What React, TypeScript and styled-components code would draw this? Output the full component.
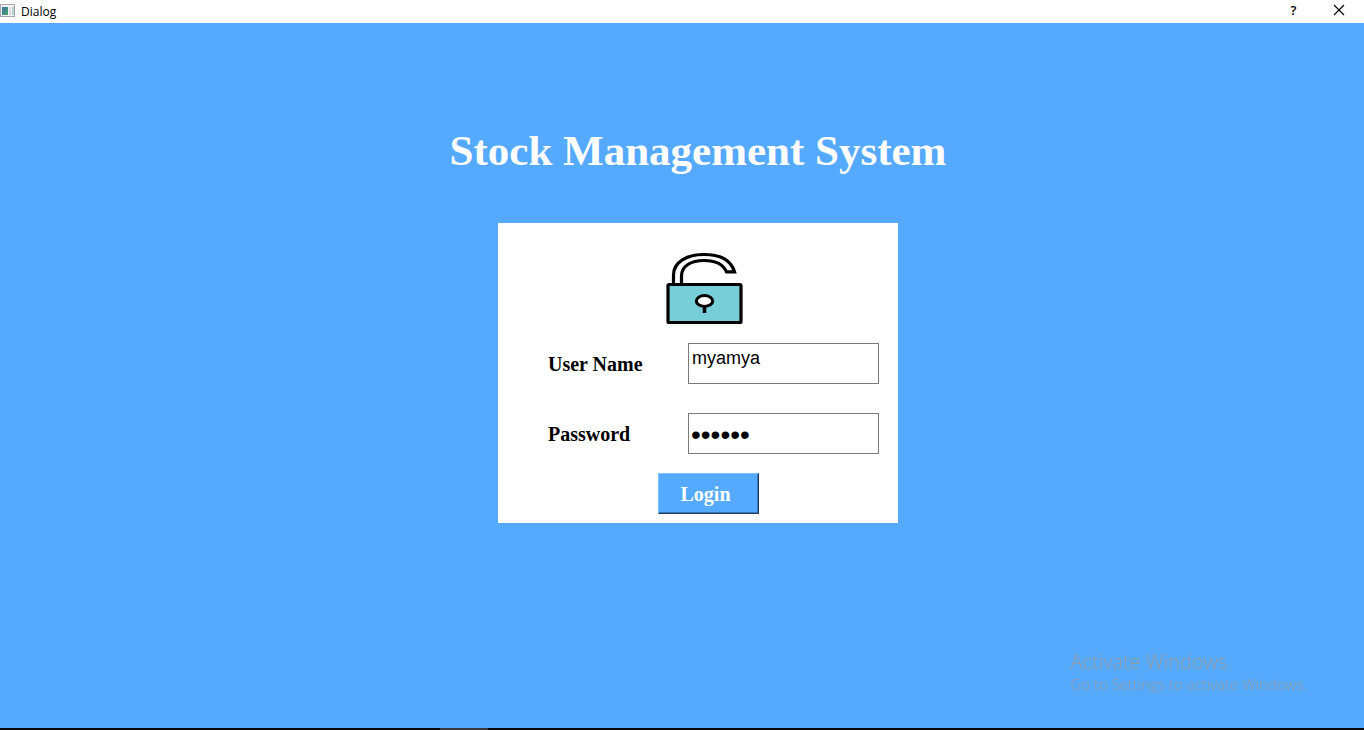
import React, { useState } from 'react';
import styled, { createGlobalStyle } from 'styled-components';

const GlobalStyle = createGlobalStyle`
  *, *::before, *::after { box-sizing: border-box; }
  body { margin: 0; background: #55aaff; }
`;

const serif = `'Palatino Linotype', 'Liberation Serif', serif`;
const ui = `'Open Sans', 'Noto Sans', sans-serif`;

const Window = styled.div`
  display: flex;
  flex-direction: column;
  min-height: 100vh;
  background: #55aaff;
`;

const TitleBar = styled.header`
  display: flex;
  align-items: center;
  height: 23px;
  background: #fff;
  color: #000;
  font: 12px/22px ${ui};
`;

const WindowTitle = styled.span`
  flex: 1;
  margin-left: 6px;
`;

const CaptionButton = styled.button`
  display: flex;
  align-items: center;
  justify-content: center;
  width: 45px;
  height: 20px;
  padding: 0;
  border: 0;
  background: transparent;
  color: #000;
  font: 600 13px/20px ${ui};
`;

const CaptionButtons = styled.div`
  display: flex;
  align-self: flex-start;
  padding-right: 3px;
`;

const Content = styled.main`
  flex: 1;
  display: flex;
  flex-direction: column;
  align-items: center;
  padding: 100px 0 100px 32px;
`;

const Heading = styled.h1`
  margin: 0 0 44px;
  color: #fff;
  font: bold 43px/56px ${serif};
  white-space: nowrap;
`;

const Card = styled.form`
  display: flex;
  flex-direction: column;
  width: 400px;
  padding: 28px 19px 9px 50px;
  background: #fff;
`;

const LockIcon = styled.svg`
  display: block;
  width: 80px;
  height: 76px;
  margin: 0 0 16px 117px;
`;

const Field = styled.div`
  display: grid;
  grid-template-columns: 140px 1fr;
  align-items: center;
  margin-bottom: ${(p: { $gap: number }) => p.$gap}px;
`;

const Label = styled.label`
  color: #000;
  font: bold 20px/24px ${serif};
`;

const TextBox = styled.input`
  width: 100%;
  height: 41px;
  padding: 0 3px 10px;
  border: 1px solid #7a7a7a;
  border-radius: 0;
  outline: 0;
  background: #fff;
  color: #000;
  font: 18px/24px 'Liberation Sans', sans-serif;
`;

const PasswordBox = styled(TextBox)`
  padding: 2px 2px 0;
  font-size: 28px;
`;

const LoginButton = styled.button`
  width: 101px;
  height: 41px;
  margin-left: 110px;
  padding: 0 6px 0 0;
  border: 1px solid;
  border-color: #80bfff #1c3c5c #1c3c5c #80bfff;
  box-shadow: inset -1px -1px #3a76b4;
  background: #55aaff;
  color: #fff;
  font: bold 20px/24px ${serif};
`;

const Watermark = styled.aside`
  position: fixed;
  right: 57px;
  bottom: 36px;
  color: #989ca4;
  font: 300 15px/20px ${ui};
  pointer-events: none;
`;

const WatermarkTitle = styled.div`
  font-size: 20px;
  line-height: 24px;
`;

const TaskEdge = styled.footer`
  display: grid;
  grid-template-columns: 440px 48px 1fr;
  height: 2px;
  background: #08080c;
`;

const ActiveTask = styled.span`
  grid-column: 2;
  background: #38383c;
`;

function AppIcon() {
  return (
    <svg width="15" height="16" viewBox="0 0 15 16" aria-hidden="true">
      <defs>
        <linearGradient id="pane" x1="0" y1="0" x2="1" y2="1">
          <stop offset="0" stopColor="#3f6fae" />
          <stop offset="1" stopColor="#43a35c" />
        </linearGradient>
      </defs>
      <rect x="0.5" y="0.5" width="14" height="12" fill="#f1f2f4" stroke="#a3a7ac" />
      <rect x="2" y="3" width="6" height="8" fill="url(#pane)" />
      <rect x="9" y="3" width="2" height="8" fill="#d9dce0" />
      <rect x="12" y="3" width="2" height="8" fill="#b4d0cb" />
    </svg>
  );
}

export default function App() {
  const [user, setUser] = useState('myamya');
  const [password, setPassword] = useState('secret');
  return (
    <>
      <GlobalStyle />
      <Window>
        <TitleBar>
          <AppIcon />
          <WindowTitle>Dialog</WindowTitle>
          <CaptionButtons>
            <CaptionButton type="button" title="Help">?</CaptionButton>
            <CaptionButton type="button" aria-label="Close">
              <svg width="12" height="12" viewBox="0 0 12 12" aria-hidden="true">
                <path d="M1 1 L11 11 M11 1 L1 11" stroke="#000" strokeWidth="1.2" />
              </svg>
            </CaptionButton>
          </CaptionButtons>
        </TitleBar>
        <Content>
          <Heading>Stock Management System</Heading>
          <Card onSubmit={(e) => e.preventDefault()}>
            <LockIcon viewBox="0 0 80 76" aria-hidden="true">
              <path
                d="M8.5 33 V24 C8.5 11 22 3.5 39 3.5 C55 3.5 66 9.5 69.5 20.8 H61.5 C58 13 50 9.5 39 9.5 C26 9.5 16.5 15 16.5 25 V33"
                fill="#fff"
                stroke="#000"
                strokeWidth="3.2"
              />
              <rect x="3" y="33.5" width="73" height="38" rx="1" fill="#78ced8" stroke="#000" strokeWidth="3.2" />
              <path d="M39.5 55 V62" stroke="#000" strokeWidth="3.5" />
              <ellipse cx="39.5" cy="50" rx="8.2" ry="5.4" fill="#fff" stroke="#000" strokeWidth="3" />
            </LockIcon>
            <Field $gap={29}>
              <Label htmlFor="user">User Name</Label>
              <TextBox id="user" value={user} onChange={(e) => setUser(e.target.value)} />
            </Field>
            <Field $gap={19}>
              <Label htmlFor="password">Password</Label>
              <PasswordBox
                id="password"
                type="password"
                value={password}
                onChange={(e) => setPassword(e.target.value)}
              />
            </Field>
            <LoginButton type="submit">Login</LoginButton>
          </Card>
        </Content>
        <TaskEdge>
          <ActiveTask />
        </TaskEdge>
      </Window>
      <Watermark>
        <WatermarkTitle>Activate Windows</WatermarkTitle>
        Go to Settings to activate Windows.
      </Watermark>
    </>
  );
}
